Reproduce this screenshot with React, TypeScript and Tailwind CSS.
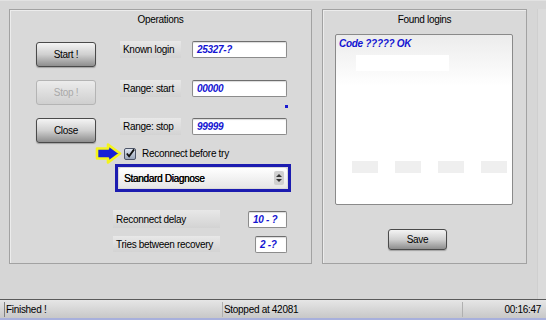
import React from "react";

const font = { fontFamily: '"Liberation Sans", Arial, sans-serif' };

function AquaButton({ label, disabled }: { label: string; disabled?: boolean }) {
  return (
    <div
      className={
        "flex items-center justify-center rounded-[3px] border text-[10px] " +
        (disabled
          ? "border-[#b4b4b4] bg-linear-to-b from-[#ececec] to-[#cfcfcf] text-[#a9a9a9]"
          : "border-[#4a4a4a] bg-linear-to-b from-[#f4f4f4] via-[#d0d0d0] to-[#8e8e8e] text-black shadow-[0_1px_1px_rgba(0,0,0,0.25)]")
      }
      style={{ width: 60, height: 25 }}
    >
      {label}
    </div>
  );
}

function FieldLabel({ text, w }: { text: string; w: number }) {
  return (
    <div
      className="flex h-[17px] items-center whitespace-nowrap bg-linear-to-b from-[#e8e8e8] to-[#d3d3d3] px-[3px] text-[10px] text-black"
      style={{ width: w }}
    >
      {text}
    </div>
  );
}

function Field({ value, w }: { value: string; w: number }) {
  return (
    <div
      className="flex h-[17px] items-center whitespace-nowrap rounded-[2px] border border-[#8c8c8c] border-t-[#6e6e6e] bg-white pl-[4px] text-[10px] font-bold italic text-[#1414d2] shadow-[inset_0_1px_1px_rgba(0,0,0,0.15)]"
      style={{ width: w }}
    >
      {value}
    </div>
  );
}

function Arrow() {
  return (
    <svg width="27" height="21" viewBox="0 0 27 21">
      <polygon
        points="2,5.5 13,5.5 13,1.6 25,10.5 13,19.4 13,15.5 2,15.5"
        fill="#1820d8"
        stroke="#f4f41c"
        strokeWidth="2.6"
        strokeLinejoin="round"
      />
    </svg>
  );
}

function CheckBox() {
  return (
    <div className="flex h-[12px] w-[12px] items-center justify-center rounded-[2px] border border-[#4d5568] bg-linear-to-b from-[#dfe6f0] to-[#9aa6ba]">
      <svg width="11" height="11" viewBox="0 0 11 11">
        <path d="M2 5.5 L4.5 8.5 L10 1" fill="none" stroke="#111" strokeWidth="2" />
      </svg>
    </div>
  );
}

export default function App() {
  return (
    <div
      className="flex h-[320px] w-[546px] flex-col overflow-hidden bg-[#d6d6d6] tracking-[-0.3px] text-black"
      style={font}
    >
      {/* main area */}
      <div className="flex flex-1 border-t border-[#e2e2e2] pl-[9px] pt-[8px]">
        {/* Operations */}
        <div className="h-[255px] w-[303px] border border-[#a2a2a2] bg-[#d9d9d9] shadow-[inset_1px_1px_0_#ececec]">
          <div className="h-[20px] pt-[3px] text-center text-[10px] leading-[14px]">Operations</div>

          <div className="mt-[11px] flex h-[26px] items-start pl-[26px]">
            <div className="mt-[1px]">
              <AquaButton label="Start !" />
            </div>
            <div className="ml-[24px]">
              <FieldLabel text="Known login" w={61} />
            </div>
            <div className="ml-[11px]">
              <Field value="25327-?" w={95} />
            </div>
          </div>

          <div className="mt-[13px] flex h-[26px] items-start pl-[26px]">
            <AquaButton label="Stop !" disabled />
            <div className="ml-[24px]">
              <FieldLabel text="Range: start" w={61} />
            </div>
            <div className="ml-[11px] flex flex-col items-end">
              <Field value="00000" w={95} />
              <div className="mr-[-1px] mt-[8px] h-[3px] w-[3px] bg-[#1a1ad0]" />
            </div>
          </div>

          <div className="mt-[12px] flex h-[26px] items-start pl-[26px]">
            <AquaButton label="Close" />
            <div className="ml-[24px]">
              <FieldLabel text="Range: stop" w={61} />
            </div>
            <div className="ml-[11px]">
              <Field value="99999" w={95} />
            </div>
          </div>

          <div className="flex h-[19px] items-center pl-[85px]">
            <Arrow />
            <div className="ml-[2px]">
              <CheckBox />
            </div>
            <span className="ml-[6px] text-[10px]">Reconnect before try</span>
          </div>

          <div className="ml-[105px] mt-[1px] h-[28px] w-[176px] border-[3px] border-[#1c1cb0] p-[1px]">
            <div className="flex h-full items-center justify-between rounded-[2px] bg-linear-to-b from-white to-[#e6e6e6] pl-[5px] pr-[3px] text-[10px]">
              <span className="[text-shadow:0.3px_0_0_#000]">Standard Diagnose</span>
              <div className="flex h-[14px] w-[10px] flex-col items-center justify-center gap-[2px] rounded-[2px] bg-[#d0d0d0]">
                <div className="h-0 w-0 border-x-[3px] border-b-[3px] border-x-transparent border-b-[#333]" />
                <div className="h-0 w-0 border-x-[3px] border-t-[3px] border-x-transparent border-t-[#333]" />
              </div>
            </div>
          </div>

          <div className="mt-[18px] flex h-[18px] items-center pl-[103px]">
            <div className="flex h-[18px] w-[107px] items-center whitespace-nowrap bg-linear-to-b from-[#e8e8e8] to-[#d3d3d3] px-[3px] text-[10px]">
              Reconnect delay
            </div>
            <div className="ml-[28px]">
              <Field value="10 - ?" w={39} />
            </div>
          </div>

          <div className="mt-[8px] flex h-[16px] items-center pl-[103px]">
            <div className="flex h-[16px] w-[107px] items-center whitespace-nowrap bg-linear-to-b from-[#e8e8e8] to-[#d3d3d3] px-[3px] text-[10px]">
              Tries between recovery
            </div>
            <div className="ml-[35px]">
              <Field value="2 -?" w={32} />
            </div>
          </div>
        </div>

        {/* Found logins */}
        <div className="ml-[10px] flex h-[255px] w-[205px] flex-col border border-[#a2a2a2] bg-[#d9d9d9] shadow-[inset_1px_1px_0_#ececec]">
          <div className="h-[20px] pt-[3px] text-center text-[10px] leading-[14px]">Found logins</div>
          <div className="ml-[12px] mt-[4px] flex h-[171px] w-[178px] flex-col rounded-[2px] border border-[#8a8a8a] bg-linear-to-b from-[#ececec] via-white via-30% to-white px-[3px] pt-[3px]">
            <div className="text-[10px] font-bold italic leading-[12px] text-[#1414d2]">Code ????? OK</div>
            <div className="ml-[17px] mt-[5px] h-[16px] w-[93px] bg-white" />
            <div className="mt-[90px] flex gap-[17px] pl-[13px]">
              <div className="h-[12px] w-[26px] bg-[#efefef]" />
              <div className="h-[12px] w-[26px] bg-[#efefef]" />
              <div className="h-[12px] w-[26px] bg-[#efefef]" />
              <div className="h-[12px] w-[26px] bg-[#efefef]" />
            </div>
          </div>
          <div className="ml-[65px] mt-[24px]">
            <div
              className="flex items-center justify-center rounded-[3px] border border-[#4a4a4a] bg-linear-to-b from-[#f4f4f4] via-[#d0d0d0] to-[#8e8e8e] text-[10px] shadow-[0_1px_1px_rgba(0,0,0,0.25)]"
              style={{ width: 59, height: 21 }}
            >
              Save
            </div>
          </div>
        </div>

        <div className="ml-[10px] flex-1 border-l border-[#cfcfcf] bg-[#dbdbdb]" />
      </div>

      {/* status bar */}
      <div className="flex h-[21px] items-center border-t border-[#5a5a5a] border-b-2 border-b-[#a8b0dc] bg-linear-to-b from-[#e6e6e6] to-[#c8c8c8] text-[10px]">
        <div className="ml-[4px] w-[218px] border-l border-[#808080] pl-[1px]">Finished !</div>
        <div className="w-[240px] border-l border-[#b0b0b0] pl-[1px]">Stopped at 42081</div>
        <div className="flex-1 border-l border-[#b0b0b0] pr-[5px] text-right">00:16:47</div>
      </div>
    </div>
  );
}
